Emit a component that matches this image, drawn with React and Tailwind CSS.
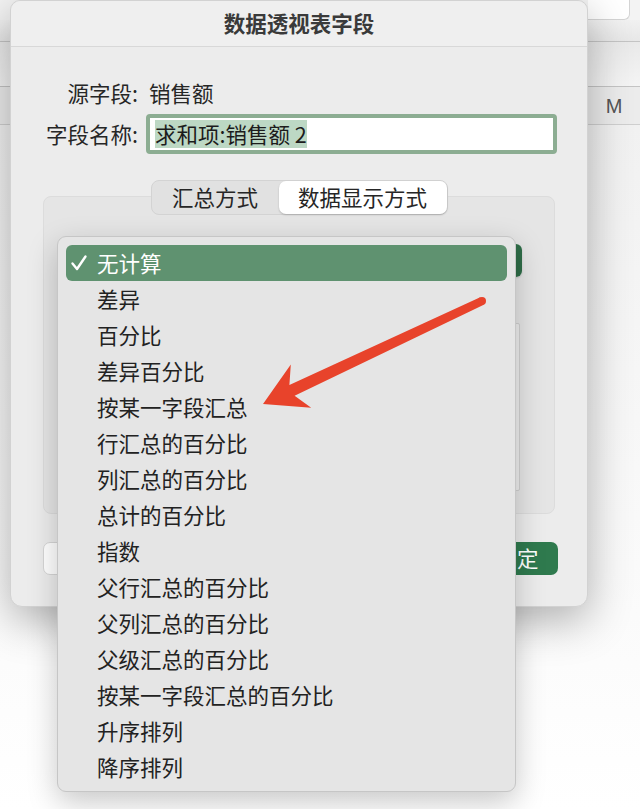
import React from "react";

const menuItems = [
  "差异",
  "百分比",
  "差异百分比",
  "按某一字段汇总",
  "行汇总的百分比",
  "列汇总的百分比",
  "总计的百分比",
  "指数",
  "父行汇总的百分比",
  "父列汇总的百分比",
  "父级汇总的百分比",
  "按某一字段汇总的百分比",
  "升序排列",
  "降序排列",
];

const font = "font-['PingFang_SC','Noto_Sans_CJK_SC','Liberation_Sans',sans-serif]";

function Sheet() {
  // spreadsheet peeking out behind the dialog
  return (
    <div className="flex flex-col w-full h-full">
      <div className="h-[20px] flex bg-[#f3f3f3]">
        <div className="flex-1" />
        <div className="w-[42px] bg-white border-r border-b border-[#d4d4d4] rounded-br-[6px]" />
        <div className="w-[10px]" />
      </div>
      <div className="h-[22px] bg-gradient-to-b from-[#f1f1f1] to-[#e7e7e7] border-b border-[#c4c4c4]" />
      <div className="h-[45px] bg-gradient-to-b from-[#e9e9e9] to-[#f4f4f4] border-b border-[#c4c4c4]" />
      <div className="h-[38px] flex bg-[#ececec] border-b border-[#cfcfcf]">
        <div className="flex-1" />
        <div className="w-[52px] flex items-center justify-center text-[20px] text-[#555] font-['Liberation_Sans',sans-serif]">
          M
        </div>
      </div>
      <div className="flex-1 bg-gradient-to-b from-[#f1f1f1] to-white" />
    </div>
  );
}

function CheckIcon() {
  return (
    <svg width="18" height="18" viewBox="0 0 18 18" fill="none">
      <path
        d="M2.5 9.5 L7 15 L15.5 2.5"
        stroke="white"
        strokeWidth="2.4"
        strokeLinecap="round"
        strokeLinejoin="round"
      />
    </svg>
  );
}

function Dialog() {
  return (
    <div className="absolute left-[10px] top-0 w-[578px] h-[607px] bg-[#ececec] rounded-t-[10px] rounded-b-[12px] shadow-[0_14px_44px_rgba(0,0,0,0.3)] border border-[#d2d2d2] flex flex-col">
      {/* TITLE */}
      <div className="h-[46px] flex items-center justify-center border-b border-[#d8d8d8] bg-[#efefef] rounded-t-[10px] text-[21.5px] font-semibold text-[#3a3a3a]">
        数据透视表字段
      </div>

      {/* FIELDS */}
      <div className="grid grid-cols-[127px_1fr] gap-x-[8px] gap-y-[6px] pt-[31px] pr-[30px] items-center text-[21.5px] text-[#262626]">
        <div className="text-right leading-[30px]">源字段:</div>
        <div className="pl-[3px] leading-[30px]">销售额</div>
        <div className="text-right">字段名称:</div>
        <div className="h-[40px] rounded-[4px] border-[4px] border-[#8cad92] bg-white flex items-center pl-[5px]">
          <span className="bg-[#bdd8c4] leading-[28px] text-[#1c1c1c]">求和项:销售额 2</span>
        </div>
      </div>

      {/* TABS + GROUP */}
      <div className="mt-[26px] mx-[32px] flex flex-col">
        <div className="relative z-10 self-center w-[297px] h-[35px] flex bg-[#e1e1e1] border border-[#d3d3d3] rounded-[8px] text-[21.5px] text-[#262626]">
          <div className="w-[127px] flex items-center justify-center">汇总方式</div>
          <div className="flex-1 flex items-center justify-center bg-white rounded-[7px] shadow-[0_1px_2px_rgba(0,0,0,0.2)]">
            数据显示方式
          </div>
        </div>
        <div className="-mt-[19px] h-[318px] bg-[#e5e5e5] border border-[#dcdcdc] rounded-[8px] flex flex-col pt-[47px] px-[32px]">
          <div className="h-[33px] flex bg-white rounded-[6px] shadow-[0_1px_2px_rgba(0,0,0,0.15)]">
            <div className="flex-1" />
            <div className="w-[20px] bg-[#2f6d48] rounded-r-[6px]" />
          </div>
          <div className="mt-[46px] h-[168px] mr-[2px] bg-[#eeeeee] border border-[#d0d0d0] rounded-[2px]" />
        </div>
      </div>

      {/* BUTTONS (cancel button is hidden under the menu) */}
      <div className="mt-[28px] mx-[32px] flex justify-between text-[21.5px]">
        <div className="w-[88px] h-[33px] bg-white rounded-[7px] border border-[#d6d6d6]" />
        <div className="w-[88px] h-[33px] -mr-[3px] pl-[6px] bg-[#2f7a4e] rounded-[7px] flex items-center justify-center text-white">
          确定
        </div>
      </div>
    </div>
  );
}

function Menu() {
  return (
    <div className="absolute left-[57px] top-[236px] w-[459px] h-[556px] bg-[#e5e5e5] border border-[#c6c6c6] rounded-[9px] shadow-[0_10px_30px_rgba(0,0,0,0.22)] px-[8px] pt-[8px] text-[21.5px] text-[#222]">
      <div className="h-[36px] flex items-center bg-[#5f9270] rounded-[6px] text-white">
        <div className="w-[31px] pl-[4px] flex items-center">
          <CheckIcon />
        </div>
        <span>无计算</span>
      </div>
      {menuItems.map((item) => (
        <div key={item} className="h-[36px] flex items-center pl-[31px]">
          {item}
        </div>
      ))}
    </div>
  );
}

function Arrow() {
  return (
    <svg className="absolute inset-0 pointer-events-none" width="640" height="809" viewBox="0 0 640 809">
      <polygon
        points="480.2,297.2 289.4,385 290.8,364.4 263,404 311.2,407.8 294.6,395.8 483.8,304.8"
        fill="#e8432b"
      />
      <circle cx="482" cy="301" r="4" fill="#e8432b" />
    </svg>
  );
}

export default function App() {
  return (
    <div className={`relative w-[640px] h-[809px] overflow-hidden bg-white ${font}`}>
      <Sheet />
      <Dialog />
      <Menu />
      <Arrow />
    </div>
  );
}
